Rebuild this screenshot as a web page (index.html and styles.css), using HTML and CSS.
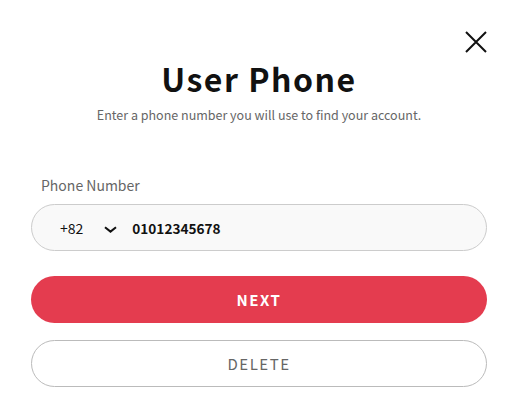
FILE: index.html
```html
<!DOCTYPE html>
<html lang="en">
<head>
<meta charset="utf-8">
<link rel="stylesheet" href="styles.css">
</head>
<body>
<div class="modal">
  <div class="close-row">
    <button class="close" aria-label="Close">
      <svg width="22" height="22" viewBox="0 0 22 22"><path d="M1 1L21 21M21 1L1 21" stroke="#111" stroke-width="2" fill="none"/></svg>
    </button>
  </div>
  <h1 class="title">User Phone</h1>
  <p class="subtitle">Enter a phone number you will use to find your account.</p>
  <label class="label">Phone Number</label>
  <div class="phone-input">
    <span class="code">+82</span>
    <svg class="chevron" width="13" height="7" viewBox="0 0 13 7"><path d="M1 1.2L6.5 5.6L12 1.2" stroke="#111" stroke-width="2" fill="none"/></svg>
    <span class="number">01012345678</span>
  </div>
  <button class="btn btn-next">NEXT</button>
  <button class="btn btn-delete">DELETE</button>
</div>
</body>
</html>
```
FILE: styles.css
```css
* { box-sizing: border-box; }
html, body { margin: 0; background: #fff; }
body { font-family: "Noto Sans CJK KR", "Noto Sans", sans-serif; color: #111; }
.modal { display: flex; flex-direction: column; padding: 31px 31px 0; }
.close-row { display: flex; justify-content: flex-end; height: 22px; }
.close { border: 0; background: none; padding: 0; width: 22px; height: 22px; display: block; }
.close svg { display: block; }
.title { margin: 5px 0 0; text-align: center; font-size: 32px; font-weight: 700; line-height: 40px; letter-spacing: 1.5px; }
.subtitle { margin: 8px 0 0; text-align: center; font-size: 12.5px; color: #666; line-height: 18px; }
.label { margin-top: 51px; font-size: 14px; color: #666; line-height: 20px; padding-left: 10px; }
.phone-input { margin-top: 9px; height: 47px; border: 1px solid #ccc; border-radius: 24px; background: #f9f9f9; display: flex; align-items: center; padding-left: 28px; font-size: 14px; }
.code { color: #111; }
.chevron { margin-left: 21px; margin-top: 3px; }
.number { margin-left: 15px; font-weight: 700; font-size: 13.6px; }
.btn { display: block; width: 100%; height: 47px; border-radius: 24px; font-family: inherit; font-size: 15px; letter-spacing: 1.5px; cursor: pointer; }
.btn-next { margin-top: 25px; background: #e43c4f; color: #fff; border: 0; font-weight: 700; }
.btn-delete { margin-top: 17px; background: #fff; color: #666; border: 1px solid #bbb; font-weight: 400; }
```
